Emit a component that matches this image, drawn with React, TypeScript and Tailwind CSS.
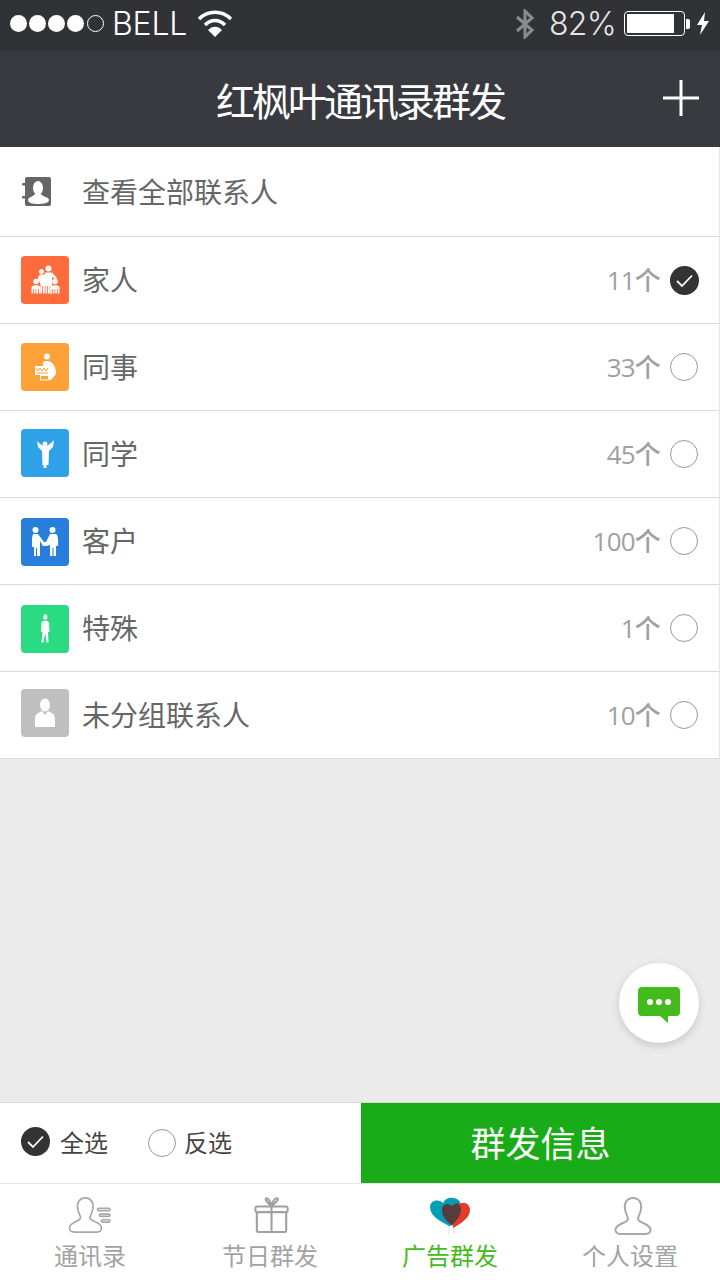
import React from 'react';

const cjk = { fontFamily: '"Noto Sans CJK SC", "Noto Sans", sans-serif' };
const statusFont = { fontFamily: 'Inter, Lato, sans-serif' };

const Wifi = () => (
  <svg width="36" height="28" viewBox="0 0 36 28" className="ml-[10px]">
    <path d="M2 9 C11 0 25 0 34 9" fill="none" stroke="#fff" strokeWidth="3.5" />
    <path d="M8 15 C14 9 22 9 28 15" fill="none" stroke="#fff" strokeWidth="3.5" />
    <path d="M11 20 C15 15.500 21 15.500 25 20 L18 27 Z" fill="#fff" />
  </svg>
);

const Bluetooth = () => (
  <svg width="20" height="30" viewBox="0 0 20 30">
    <path d="M2 8 L17 21 L10 28 L10 2 L17 9 L2 22" fill="none" stroke="#8a8b8e" strokeWidth="3" />
  </svg>
);

const StatusBar = () => (
  <div className="h-[51px] bg-[#313236] flex items-center pl-[10px] pr-[10px] pb-[4px] text-white shrink-0">
    <div className="flex items-center gap-[2px]">
      {[0, 1, 2, 3].map((i) => (
        <span key={i} className="w-[17px] h-[17px] rounded-full bg-white" />
      ))}
      <span className="w-[17px] h-[17px] rounded-full border border-white ml-[1px]" />
    </div>
    <span className="ml-[8px] text-[32px] font-light leading-none tracking-[-0.2px]" style={statusFont}>BELL</span>
    <Wifi />
    <div className="ml-auto flex items-center">
      <Bluetooth />
      <span className="ml-[14px] text-[32px] font-light leading-none tracking-[-0.7px] text-[#e4e4e5]" style={statusFont}>82%</span>
      <div className="ml-[8px] w-[61px] h-[25px] rounded-[4px] border border-white p-[2px]">
        <div className="w-[47px] h-full bg-white" />
      </div>
      <div className="w-[4px] h-[10px] bg-white rounded-r-[2px] ml-[1px]" />
      <svg width="14" height="23" viewBox="0 0 14 23" className="ml-[6px]">
        <path d="M9 0 L1 13 L6 13 L4 23 L13 9 L8 9 Z" fill="#fff" />
      </svg>
    </div>
  </div>
);

const Header = () => (
  <div className="h-[96px] bg-[#393a3f] relative flex items-center justify-center shrink-0">
    <span className="text-[39px] leading-none text-white tracking-[-3px]" style={cjk}>红枫叶通讯录群发</span>
    <svg width="36" height="36" viewBox="0 0 36 36" className="absolute right-[21px] top-[29px]">
      <path d="M18 0 V36 M0 18 H36" stroke="#fff" strokeWidth="3" />
    </svg>
  </div>
);

const ContactBook = () => (
  <svg width="48" height="48" viewBox="0 0 48 48">
    <rect x="4" y="9" width="26" height="29" rx="2" fill="#666" />
    <rect x="1" y="15" width="5" height="2.500" rx="1" fill="#666" />
    <rect x="1" y="28" width="5" height="2.500" rx="1" fill="#666" />
    <ellipse cx="17" cy="20" rx="5" ry="7" fill="#fff" />
    <path d="M7 32 C7 29 12 29 14 26 H20 C22 29 28 29 28 32 C28 35 22 36 17 36 C12 36 7 35 7 32 Z" fill="#fff" />
  </svg>
);

const FamilyIcon = () => (
  <svg width="48" height="48" viewBox="0 0 48 48" fill="#fff">
    <circle cx="27.500" cy="12.500" r="3" />
    <circle cx="20.500" cy="15.500" r="2.500" />
    <circle cx="15" cy="25.500" r="2.800" />
    <circle cx="34" cy="25.500" r="2.800" />
    <path d="M24 16.500 H31 L36 22 L35 23.500 L31 21 V37.500 H29.500 V30 H28.700 V37.500 H27 V30 H26.200 V37.500 H24.500 V30 H23.700 V37.500 H22 V30 H21.200 V37.500 H19.500 V28 L16.500 22 L19 18.500 H24 Z" />
    <path d="M10.500 31 C11.500 28.500 18.500 28.500 19.500 31 V37.500 H17.800 V33 H17 V37.500 H15.300 V33 H14.500 V37.500 H12.800 V33 H12 V37.500 H10.500 Z" />
    <path d="M29.500 31 C30.500 28.500 37.500 28.500 38.500 31 V37.500 H36.800 V33 H36 V37.500 H34.300 V33 H33.500 V37.500 H31.800 V33 H31 V37.500 H29.500 Z" />
  </svg>
);

const ColleagueIcon = () => (
  <svg width="48" height="48" viewBox="0 0 48 48">
    <circle cx="26" cy="13.500" r="3" fill="#fff" />
    <path d="M22 19 C24 17.500 28 17.500 30 19 C33 21 35.500 27 35 31 L30 37 H24 V23 H22 Z" fill="#fff" />
    <rect x="14" y="23" width="15" height="9" fill="#fff" />
    <path d="M15 25 L17 28 L19 25 L21 28 L23 25 L25 28 L27 25 M16 30 H27" stroke="#ffa139" strokeWidth="1" fill="none" />
    <rect x="19.500" y="32.500" width="8" height="4.500" fill="#ffa139" stroke="#fff" strokeWidth="1" />
  </svg>
);

const GraduateIcon = () => (
  <svg width="48" height="48" viewBox="0 0 48 48" fill="#fff">
    <circle cx="24" cy="15" r="2.500" />
    <path d="M16 12 L18 14 L22 17 H26 L30 14 L33 11 L32 18 L28 22 L27.500 36 H25.500 V39 H22.500 V36 H21.500 L21 22 L17 18 Z" />
  </svg>
);

const HandshakeIcon = () => (
  <svg width="48" height="48" viewBox="0 0 48 48" fill="#fff">
    <circle cx="14.500" cy="12" r="3" />
    <circle cx="31.500" cy="12" r="3" />
    <path d="M12 16 H17 L23 24 L25 24 L29 16 H35 C37 17 37.500 22 37 28 H35 V38 H32.500 V30 H31.500 V38 H29 V27 L25 28 H22 L19 23 V38 H16 V30 H15 V38 H13 V29 H11 V20 Z" />
  </svg>
);

const StandingIcon = () => (
  <svg width="48" height="48" viewBox="0 0 48 48" fill="#fff">
    <ellipse cx="24.300" cy="12" rx="2" ry="2.800" />
    <path d="M20.500 17 Q24.300 14 28 17 L28.500 27 H27 L27.500 37.500 H25.500 L24.500 29 H24 L22.500 37.500 H20.500 L21.500 27 H20 Z" />
  </svg>
);

const PersonIcon = () => (
  <svg width="48" height="48" viewBox="0 0 48 48" fill="#fff">
    <ellipse cx="24" cy="16" rx="5" ry="6.500" />
    <path d="M21 22 L24 26 L27 22 C31 24 34 25 34 30 V38 H14 V30 C14 25 17 24 21 22 Z" />
  </svg>
);

const Checked = ({ className = '' }: { className?: string }) => (
  <svg width="29" height="29" viewBox="0 0 29 29" className={`shrink-0 ${className}`}>
    <circle cx="14.500" cy="14.500" r="14.500" fill="#333" />
    <path d="M7 15 L12 20 L22 9.500" fill="none" stroke="#fff" strokeWidth="1.800" />
  </svg>
);

const Unchecked = () => <span className="w-[28px] h-[28px] rounded-full border border-[#999] bg-white shrink-0" />;

const groups = [
  { name: '家人', count: '11个', color: 'bg-[#ff6b3b]', nudge: '', icon: <FamilyIcon />, checked: true },
  { name: '同事', count: '33个', color: 'bg-[#ffa139]', nudge: '', icon: <ColleagueIcon /> },
  { name: '同学', count: '45个', color: 'bg-[#2ea1e8]', nudge: 'mb-[2px]', icon: <GraduateIcon /> },
  { name: '客户', count: '100个', color: 'bg-[#277fdb]', nudge: 'mt-[2px]', icon: <HandshakeIcon /> },
  { name: '特殊', count: '1个', color: 'bg-[#2bdb82]', nudge: 'mt-[2px]', icon: <StandingIcon /> },
  { name: '未分组联系人', count: '10个', color: 'bg-[#bfbfbf]', nudge: 'mb-[4px]', icon: <PersonIcon /> },
];

const GroupRow = ({ group }: { group: (typeof groups)[number] }) => (
  <div className="h-[87px] flex items-center pl-[21px] pr-[21px] border-b border-[#d9d9d9]">
    <div className={`w-[48px] h-[48px] rounded-[4px] ${group.color} ${group.nudge}`}>{group.icon}</div>
    <span className="ml-[13px] pb-[2px] text-[28px] leading-none text-[#666]" style={cjk}>{group.name}</span>
    <span className="ml-auto text-[26px] font-medium leading-none text-[#a0a0a0] tracking-[-0.8px] mr-[10px]" style={{ fontFamily: '"Open Sans", "Noto Sans CJK SC", sans-serif' }}>{group.count}</span>
    {group.checked ? <Checked className="-mr-[1px]" /> : <Unchecked />}
  </div>
);

const ContactsIcon = () => (
  <svg width="44" height="36" viewBox="0 0 46 38" fill="none" stroke="#a8a8a8" strokeWidth="1.800">
    <path d="M18 1 C24 1 27 6 26 12 C25.500 17 23 19 23 22 C23 26 34 26 35 32 C35.500 36 33 37 30 37 H7 C3 37 1 36 1.500 32 C2.500 26 13 26 13 22 C13 19 10.500 17 10 12 C9 6 12 1 18 1 Z" />
    <rect x="31" y="12" width="13" height="2.500" rx="1.200" />
    <rect x="33" y="18" width="11" height="2.500" rx="1.200" />
    <rect x="35" y="24" width="9" height="2.500" rx="1.200" />
  </svg>
);

const GiftIcon = () => (
  <svg width="36" height="36" viewBox="0 0 38 38" fill="none" stroke="#a0a0a0" strokeWidth="2.200" className="ml-[3px]">
    <rect x="3" y="15" width="31" height="22" rx="2" />
    <rect x="1.500" y="10" width="34" height="6" rx="2" fill="#fff" />
    <path d="M18.500 10 V37" />
    <path d="M18.500 10 C14 6 11 2 13 1.500 C15 0.500 18 6 18.500 10 C19 6 22 0.500 24.500 1.500 C27 2 23 6 18.500 10 Z" />
  </svg>
);

const HeartsIcon = () => (
  <svg width="40" height="37" viewBox="0 0 40 37">
    <path d="M19 29 C10 24 0 19 0 10 C0 4 8 1 13 6 C16 -1 28 -1 31 7 L24 28 Z" fill="#049db6" />
    <path d="M23 31 C30 27 40 21 40 13 C40 7 34 4 30 7 C27 4 22 8 22 14 Z" fill="#e43a28" />
    <path d="M22 28 C17 25 12 20 12 13 C12 7 18 5 22 9 C25 5 31 7 31 12 C31 19 26 24 22 28 Z" fill="#563c3c" />
    <path d="M19 29 V37" stroke="#cfeaee" strokeWidth="1" />
    <path d="M24 31 V37" stroke="#f7c7c2" strokeWidth="1" />
  </svg>
);

const UserIcon = () => (
  <svg width="38" height="38" viewBox="0 0 38 38" fill="none" stroke="#a8a8a8" strokeWidth="2" className="ml-[5px]">
    <path d="M19 1 C25 1 28 6 27 12 C26.500 17 24 19 24 22 C24 26 35 26 36.500 32 C37 36 34 37 31 37 H7 C4 37 1 36 1.500 32 C3 26 14 26 14 22 C14 19 11.500 17 11 12 C10 6 13 1 19 1 Z" />
  </svg>
);

const tabs = [
  { label: '通讯录', icon: <ContactsIcon />, active: false },
  { label: '节日群发', icon: <GiftIcon />, active: false },
  { label: '广告群发', icon: <HeartsIcon />, active: true },
  { label: '个人设置', icon: <UserIcon />, active: false },
];

export default function App() {
  return (
    <div className="w-[720px] h-[1280px] flex flex-col bg-[#ebebeb] overflow-hidden" style={cjk}>
      <StatusBar />
      <Header />

      <div className="relative flex-1 flex flex-col">
        <div className="bg-white border-r border-[#e4e4e4]">
          <div className="h-[90px] flex items-center pl-[21px] border-b border-[#d9d9d9]">
            <ContactBook />
            <span className="ml-[13px] pb-[2px] text-[28px] leading-none text-[#666]" style={cjk}>查看全部联系人</span>
          </div>
          {groups.map((g) => (
            <GroupRow key={g.name} group={g} />
          ))}
        </div>

        <button className="absolute right-[21px] top-[816px] w-[80px] h-[80px] rounded-full bg-white shadow-[0_3px_8px_rgba(0,0,0,0.15)] flex items-center justify-center">
          <svg width="42" height="36" viewBox="0 0 42 36" className="mt-[4px]">
            <path d="M4 0 H38 C40.500 0 42 1.500 42 4 V25 C42 27.500 40.500 29 38 29 H30 V36 L22 29 H4 C1.500 29 0 27.500 0 25 V4 C0 1.500 1.500 0 4 0 Z" fill="#44bb1c" />
            <circle cx="12" cy="15" r="3" fill="#fff" />
            <circle cx="21" cy="15" r="3" fill="#fff" />
            <circle cx="30" cy="15" r="3" fill="#fff" />
          </svg>
        </button>
      </div>

      <div className="h-[81px] shrink-0 flex bg-white border-t border-[#d9d9d9]">
        <div className="w-[361px] flex items-center pl-[21px]">
          <Checked className="mb-[4px]" />
          <span className="ml-[10px] pb-[2px] text-[24px] leading-none text-[#444]">全选</span>
          <span className="ml-[40px] flex items-center">
            <Unchecked />
            <span className="ml-[8px] pb-[2px] text-[24px] leading-none text-[#444]">反选</span>
          </span>
        </div>
        <div className="flex-1 bg-[#1aab18] flex items-center justify-center pb-[3px] text-white text-[35px] leading-none">群发信息</div>
      </div>

      <div className="h-[97px] shrink-0 grid grid-cols-4 bg-white border-t border-[#e5e5e5]">
        {tabs.map((t) => (
          <div key={t.label} className="flex flex-col items-center pt-[13px]">
            <div className="h-[38px] flex items-start justify-center">{t.icon}</div>
            <span className={`mt-[6px] text-[24px] leading-[28px] ${t.active ? 'text-[#44bb1c]' : 'text-[#a3a3a3]'}`}>{t.label}</span>
          </div>
        ))}
      </div>
    </div>
  );
}
